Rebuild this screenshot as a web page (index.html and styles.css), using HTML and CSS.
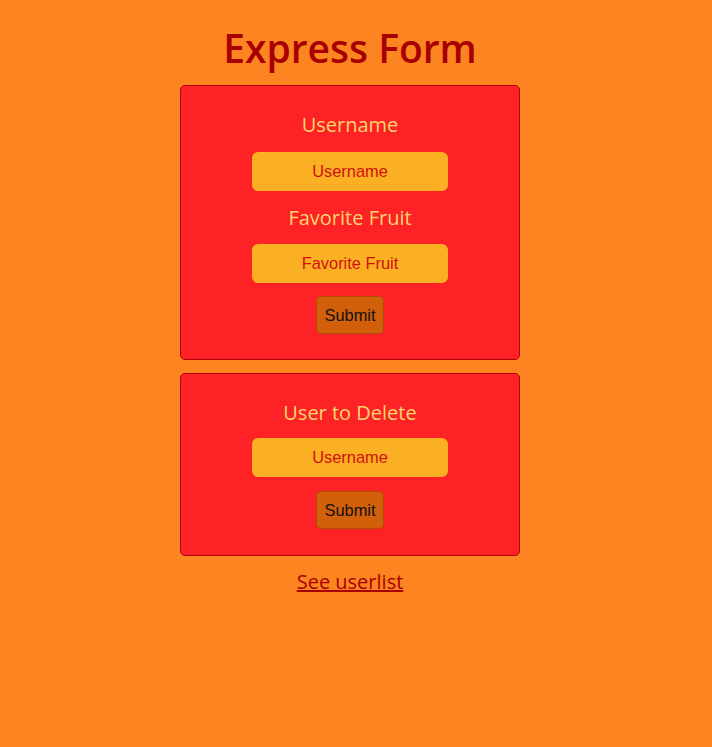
FILE: index.html
```html
<!DOCTYPE html>
<html>
<head>
<meta charset="utf-8">
<title>Express Form</title>
<link rel="stylesheet" href="styles.css">
</head>
<body>
<main class="page">
  <h1 class="title">Express Form</h1>
  <form class="card card-add">
    <label class="label" for="u1">Username</label>
    <input class="field field-first" id="u1" type="text" placeholder="Username">
    <label class="label label-second" for="f1">Favorite Fruit</label>
    <input class="field" id="f1" type="text" placeholder="Favorite Fruit">
    <button class="submit" type="button">Submit</button>
  </form>
  <form class="card card-delete">
    <label class="label" for="u2">User to Delete</label>
    <input class="field field-delete" id="u2" type="text" placeholder="Username">
    <button class="submit submit-delete" type="button">Submit</button>
  </form>
  <a class="link" href="#">See userlist</a>
</main>
</body>
</html>
```

FILE: styles.css
```css
html, body {
  margin: 0;
  padding: 0;
  background: #fc8421;
  height: 100%;
}

.page {
  width: 700px;
  display: flex;
  flex-direction: column;
  align-items: center;
  font-family: "Open Sans", "Liberation Sans", sans-serif;
}

.title {
  margin: 19px 0 9px;
  font-size: 39px;
  font-weight: 600;
  line-height: 57px;
  color: #a80000;
}

.card {
  box-sizing: border-box;
  width: 340px;
  background: #fc2226;
  border: 1px solid #b00008;
  border-radius: 5px;
  display: flex;
  flex-direction: column;
  align-items: center;
  padding: 25px 0 0;
}

.card-add {
  height: 275px;
}

.card-delete {
  margin-top: 13px;
  height: 183px;
}

.label {
  font-size: 20px;
  line-height: 28px;
  color: #ffd46c;
}

.label-second {
  margin-top: 13px;
}

.field {
  box-sizing: border-box;
  margin-top: 12px;
  width: 196px;
  height: 39px;
  border: none;
  border-radius: 6px;
  background: #fab022;
  font-family: "Liberation Sans", Arial, sans-serif;
  font-size: 16.4px;
  text-align: center;
  color: #d01010;
  padding: 0;
}

.field-first {
  margin-top: 13px;
}

.field-delete {
  margin-top: 11px;
}

.field::placeholder {
  color: #d01010;
  opacity: 1;
}

.submit {
  box-sizing: border-box;
  margin-top: 13px;
  height: 38px;
  padding: 0 7px;
  background: #d2600a;
  border: 1px solid #b24c00;
  border-radius: 5px;
  font-family: "Liberation Sans", Arial, sans-serif;
  font-size: 16.4px;
  color: #111;
}

.submit-delete {
  margin-top: 14px;
}

.link {
  margin-top: 12px;
  font-size: 20px;
  line-height: 28px;
  color: #a80000;
  text-decoration: underline;
}
```
